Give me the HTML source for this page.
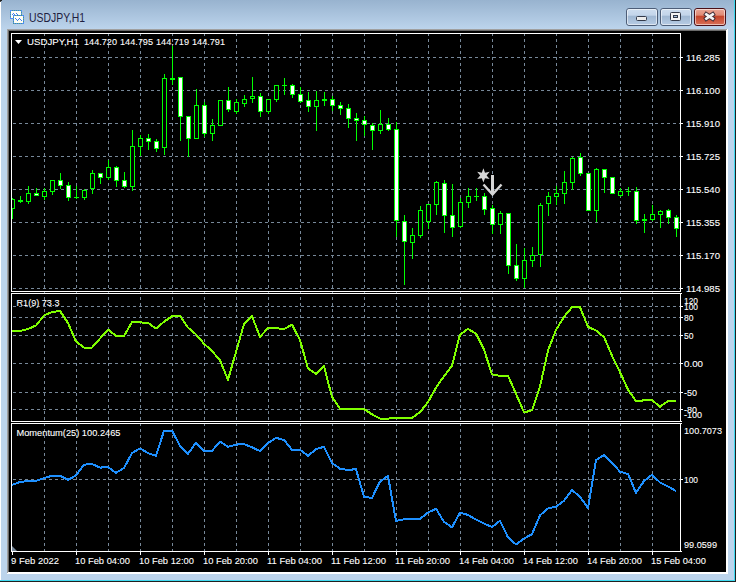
<!DOCTYPE html>
<html><head><meta charset="utf-8"><title>USDJPY,H1</title>
<style>
html,body{margin:0;padding:0;width:738px;height:582px;overflow:hidden;background:#fff;}
svg{display:block;}
text{font-family:"Liberation Sans",sans-serif;}
</style></head><body>
<svg width="738" height="582" viewBox="0 0 738 582">
<defs>
<linearGradient id="tg" x1="0" y1="0" x2="0" y2="1">
<stop offset="0" stop-color="#98b3cf"/><stop offset="1" stop-color="#bcd4ec"/>
</linearGradient>
<linearGradient id="bg1" x1="0" y1="0" x2="0" y2="1">
<stop offset="0" stop-color="#cfdeef"/><stop offset="0.4" stop-color="#c3d5ea"/>
<stop offset="0.44" stop-color="#9fb7d2"/><stop offset="1" stop-color="#b8cde5"/>
</linearGradient>
<linearGradient id="bgc" x1="0" y1="0" x2="0" y2="1">
<stop offset="0" stop-color="#eba99a"/><stop offset="0.4" stop-color="#e08a74"/>
<stop offset="0.44" stop-color="#c4432a"/><stop offset="1" stop-color="#d9735a"/>
</linearGradient>
</defs>

<rect x="0" y="0" width="738" height="582" fill="#bcd4ec"/>
<rect x="0" y="0" width="738" height="29" fill="url(#tg)"/>
<rect x="0" y="2" width="1" height="580" fill="#ffffff"/>
<rect x="0" y="0" width="2" height="1" fill="#202020"/><rect x="0" y="1" width="1" height="1" fill="#404040"/>
<rect x="0" y="580" width="735" height="1" fill="#3fd9f0"/>
<rect x="0" y="581" width="736" height="1" fill="#202020"/>
<rect x="734" y="0" width="1" height="581" fill="#3fd9f0"/>
<rect x="735" y="0" width="1" height="582" fill="#202020"/>
<rect x="736" y="0" width="2" height="582" fill="#ffffff"/>
<rect x="7" y="29" width="721" height="545" fill="#ffffff"/>
<rect x="7" y="29" width="720" height="544" fill="#a0a0a0"/>
<rect x="8" y="30" width="718" height="542" fill="#696969"/>
<rect x="9" y="31" width="717" height="541" fill="#000000"/>
<rect x="726" y="30" width="1" height="543" fill="#ffffff"/><rect x="8" y="572" width="719" height="1" fill="#ffffff"/>
<g shape-rendering="crispEdges"><rect x="10" y="10" width="12" height="9" fill="#4f8ef5"/><rect x="11" y="11" width="10" height="7" fill="#fffff4"/><rect x="13" y="15" width="11" height="9" fill="#4f8ef5"/><rect x="14" y="16" width="9" height="7" fill="#fffff4"/><rect x="12" y="14" width="1" height="1" fill="#3f7ef2"/><rect x="13" y="13" width="1" height="1" fill="#3f7ef2"/><rect x="14" y="14" width="1" height="1" fill="#3f7ef2"/><rect x="16" y="13" width="1" height="1" fill="#3f7ef2"/><rect x="17" y="14" width="1" height="1" fill="#3f7ef2"/><rect x="18" y="15" width="1" height="1" fill="#3f7ef2"/><rect x="19" y="15" width="1" height="1" fill="#3f7ef2"/><rect x="20" y="15" width="1" height="1" fill="#3f7ef2"/><rect x="15" y="18" width="1" height="1" fill="#3f7ef2"/><rect x="16" y="19" width="1" height="1" fill="#3f7ef2"/><rect x="17" y="20" width="1" height="1" fill="#3f7ef2"/><rect x="18" y="19" width="1" height="1" fill="#3f7ef2"/><rect x="19" y="18" width="1" height="1" fill="#3f7ef2"/><rect x="20" y="19" width="1" height="1" fill="#3f7ef2"/><rect x="21" y="20" width="1" height="1" fill="#3f7ef2"/><rect x="12" y="10" width="1" height="1" fill="#4a9a88"/><rect x="14" y="10" width="1" height="1" fill="#4a9a88"/><rect x="16" y="10" width="1" height="1" fill="#4a9a88"/><rect x="18" y="10" width="1" height="1" fill="#4a9a88"/><rect x="20" y="10" width="1" height="1" fill="#4a9a88"/><rect x="10" y="12" width="1" height="1" fill="#4a9a88"/><rect x="10" y="14" width="1" height="1" fill="#4a9a88"/><rect x="10" y="16" width="1" height="1" fill="#4a9a88"/><rect x="21" y="12" width="1" height="1" fill="#4a9a88"/><rect x="21" y="14" width="1" height="1" fill="#4a9a88"/><rect x="13" y="17" width="1" height="1" fill="#4a9a88"/><rect x="13" y="19" width="1" height="1" fill="#4a9a88"/><rect x="13" y="21" width="1" height="1" fill="#4a9a88"/><rect x="13" y="23" width="1" height="1" fill="#4a9a88"/><rect x="15" y="23" width="1" height="1" fill="#4a9a88"/><rect x="17" y="23" width="1" height="1" fill="#4a9a88"/><rect x="19" y="23" width="1" height="1" fill="#4a9a88"/><rect x="21" y="23" width="1" height="1" fill="#4a9a88"/><rect x="23" y="17" width="1" height="1" fill="#4a9a88"/><rect x="23" y="19" width="1" height="1" fill="#4a9a88"/><rect x="23" y="21" width="1" height="1" fill="#4a9a88"/><rect x="15" y="15" width="1" height="1" fill="#4a9a88"/><rect x="17" y="15" width="1" height="1" fill="#4a9a88"/><rect x="19" y="15" width="1" height="1" fill="#4a9a88"/><rect x="21" y="15" width="1" height="1" fill="#4a9a88"/></g>
<text x="29" y="22" font-size="12" fill="#1e2040" textLength="56" lengthAdjust="spacingAndGlyphs">USDJPY,H1</text>
<rect x="626.5" y="8.5" width="31" height="17" rx="2.5" fill="url(#bg1)" stroke="#4d5e78" stroke-width="1"/><rect x="627.5" y="9.5" width="29" height="15" rx="1.5" fill="none" stroke="#ffffff" stroke-opacity="0.55" stroke-width="1"/>
<rect x="660.5" y="8.5" width="31" height="17" rx="2.5" fill="url(#bg1)" stroke="#4d5e78" stroke-width="1"/><rect x="661.5" y="9.5" width="29" height="15" rx="1.5" fill="none" stroke="#ffffff" stroke-opacity="0.55" stroke-width="1"/>
<rect x="694.5" y="8.5" width="31" height="17" rx="2.5" fill="url(#bgc)" stroke="#4a1018" stroke-width="1"/><rect x="695.5" y="9.5" width="29" height="15" rx="1.5" fill="none" stroke="#ffffff" stroke-opacity="0.55" stroke-width="1"/>
<rect x="636.5" y="16.5" width="10" height="4" rx="1" fill="#ececec" stroke="#333a4a" stroke-width="1"/>
<rect x="670.5" y="12.5" width="10" height="8" rx="1" fill="#f4f4f4" stroke="#333a4a" stroke-width="1"/>
<rect x="673.5" y="15.5" width="4" height="2" fill="#a8c0dc" stroke="#333a4a" stroke-width="1"/>
<path d="M706.3,14.4 L712.7,18.6 M712.7,14.4 L706.3,18.6" stroke="#3a2630" stroke-width="4.4" stroke-linecap="square"/>
<path d="M706.3,14.4 L712.7,18.6 M712.7,14.4 L706.3,18.6" stroke="#f4f4f4" stroke-width="2.6" stroke-linecap="square"/>
<g shape-rendering="crispEdges">
<line x1="13" y1="57.5" x2="680" y2="57.5" stroke="#778899" stroke-width="1" stroke-dasharray="3 3"/>
<line x1="13" y1="90.5" x2="680" y2="90.5" stroke="#778899" stroke-width="1" stroke-dasharray="3 3"/>
<line x1="13" y1="123.5" x2="680" y2="123.5" stroke="#778899" stroke-width="1" stroke-dasharray="3 3"/>
<line x1="13" y1="156.5" x2="680" y2="156.5" stroke="#778899" stroke-width="1" stroke-dasharray="3 3"/>
<line x1="13" y1="189.5" x2="680" y2="189.5" stroke="#778899" stroke-width="1" stroke-dasharray="3 3"/>
<line x1="13" y1="222.5" x2="680" y2="222.5" stroke="#778899" stroke-width="1" stroke-dasharray="3 3"/>
<line x1="13" y1="255.5" x2="680" y2="255.5" stroke="#778899" stroke-width="1" stroke-dasharray="3 3"/>
<line x1="13" y1="288.5" x2="680" y2="288.5" stroke="#778899" stroke-width="1" stroke-dasharray="3 3"/>
<line x1="13" y1="306.5" x2="680" y2="306.5" stroke="#778899" stroke-width="1" stroke-dasharray="3 3"/>
<line x1="13" y1="317.5" x2="680" y2="317.5" stroke="#778899" stroke-width="1" stroke-dasharray="3 3"/>
<line x1="13" y1="335.5" x2="680" y2="335.5" stroke="#778899" stroke-width="1" stroke-dasharray="3 3"/>
<line x1="13" y1="363.5" x2="680" y2="363.5" stroke="#778899" stroke-width="1" stroke-dasharray="3 3"/>
<line x1="13" y1="392.5" x2="680" y2="392.5" stroke="#778899" stroke-width="1" stroke-dasharray="3 3"/>
<line x1="13" y1="409.5" x2="680" y2="409.5" stroke="#778899" stroke-width="1" stroke-dasharray="3 3"/>
<line x1="13" y1="479.5" x2="680" y2="479.5" stroke="#778899" stroke-width="1" stroke-dasharray="3 3"/>
<line x1="44.5" y1="33" x2="44.5" y2="551" stroke="#778899" stroke-width="1" stroke-dasharray="3 3"/>
<line x1="76.5" y1="33" x2="76.5" y2="551" stroke="#778899" stroke-width="1" stroke-dasharray="3 3"/>
<line x1="108.5" y1="33" x2="108.5" y2="551" stroke="#778899" stroke-width="1" stroke-dasharray="3 3"/>
<line x1="140.5" y1="33" x2="140.5" y2="551" stroke="#778899" stroke-width="1" stroke-dasharray="3 3"/>
<line x1="172.5" y1="33" x2="172.5" y2="551" stroke="#778899" stroke-width="1" stroke-dasharray="3 3"/>
<line x1="204.5" y1="33" x2="204.5" y2="551" stroke="#778899" stroke-width="1" stroke-dasharray="3 3"/>
<line x1="236.5" y1="33" x2="236.5" y2="551" stroke="#778899" stroke-width="1" stroke-dasharray="3 3"/>
<line x1="268.5" y1="33" x2="268.5" y2="551" stroke="#778899" stroke-width="1" stroke-dasharray="3 3"/>
<line x1="300.5" y1="33" x2="300.5" y2="551" stroke="#778899" stroke-width="1" stroke-dasharray="3 3"/>
<line x1="332.5" y1="33" x2="332.5" y2="551" stroke="#778899" stroke-width="1" stroke-dasharray="3 3"/>
<line x1="364.5" y1="33" x2="364.5" y2="551" stroke="#778899" stroke-width="1" stroke-dasharray="3 3"/>
<line x1="396.5" y1="33" x2="396.5" y2="551" stroke="#778899" stroke-width="1" stroke-dasharray="3 3"/>
<line x1="428.5" y1="33" x2="428.5" y2="551" stroke="#778899" stroke-width="1" stroke-dasharray="3 3"/>
<line x1="460.5" y1="33" x2="460.5" y2="551" stroke="#778899" stroke-width="1" stroke-dasharray="3 3"/>
<line x1="492.5" y1="33" x2="492.5" y2="551" stroke="#778899" stroke-width="1" stroke-dasharray="3 3"/>
<line x1="524.5" y1="33" x2="524.5" y2="551" stroke="#778899" stroke-width="1" stroke-dasharray="3 3"/>
<line x1="556.5" y1="33" x2="556.5" y2="551" stroke="#778899" stroke-width="1" stroke-dasharray="3 3"/>
<line x1="588.5" y1="33" x2="588.5" y2="551" stroke="#778899" stroke-width="1" stroke-dasharray="3 3"/>
<line x1="620.5" y1="33" x2="620.5" y2="551" stroke="#778899" stroke-width="1" stroke-dasharray="3 3"/>
<line x1="652.5" y1="33" x2="652.5" y2="551" stroke="#778899" stroke-width="1" stroke-dasharray="3 3"/>
</g>
<g shape-rendering="crispEdges">
<clipPath id="cm"><rect x="12" y="34" width="668" height="257"/></clipPath>
<g clip-path="url(#cm)">
<rect x="12" y="198" width="1" height="21" fill="#00ff00"/>
<rect x="10" y="199" width="5" height="10" fill="#00ff00"/>
<rect x="11" y="200" width="3" height="8" fill="#000000"/>
<rect x="20" y="196" width="1" height="7" fill="#00ff00"/>
<rect x="18" y="200" width="5" height="2" fill="#00ff00"/>
<rect x="28" y="186" width="1" height="18" fill="#00ff00"/>
<rect x="26" y="193" width="5" height="9" fill="#00ff00"/>
<rect x="27" y="194" width="3" height="7" fill="#000000"/>
<rect x="36" y="188" width="1" height="8" fill="#00ff00"/>
<rect x="34" y="193" width="5" height="3" fill="#00ff00"/>
<rect x="35" y="194" width="3" height="1" fill="#ffffff"/>
<rect x="44" y="188" width="1" height="12" fill="#00ff00"/>
<rect x="42" y="191" width="5" height="6" fill="#00ff00"/>
<rect x="43" y="192" width="3" height="4" fill="#000000"/>
<rect x="52" y="180" width="1" height="15" fill="#00ff00"/>
<rect x="50" y="180" width="5" height="12" fill="#00ff00"/>
<rect x="51" y="181" width="3" height="10" fill="#000000"/>
<rect x="60" y="173" width="1" height="16" fill="#00ff00"/>
<rect x="58" y="180" width="5" height="6" fill="#00ff00"/>
<rect x="59" y="181" width="3" height="4" fill="#ffffff"/>
<rect x="68" y="182" width="1" height="19" fill="#00ff00"/>
<rect x="66" y="185" width="5" height="13" fill="#00ff00"/>
<rect x="67" y="186" width="3" height="11" fill="#ffffff"/>
<rect x="76" y="186" width="1" height="13" fill="#00ff00"/>
<rect x="74" y="197" width="5" height="1" fill="#00ff00"/>
<rect x="84" y="189" width="1" height="11" fill="#00ff00"/>
<rect x="82" y="190" width="5" height="8" fill="#00ff00"/>
<rect x="83" y="191" width="3" height="6" fill="#000000"/>
<rect x="92" y="170" width="1" height="24" fill="#00ff00"/>
<rect x="90" y="173" width="5" height="16" fill="#00ff00"/>
<rect x="91" y="174" width="3" height="14" fill="#000000"/>
<rect x="100" y="173" width="1" height="11" fill="#00ff00"/>
<rect x="98" y="173" width="5" height="5" fill="#00ff00"/>
<rect x="99" y="174" width="3" height="3" fill="#ffffff"/>
<rect x="108" y="160" width="1" height="20" fill="#00ff00"/>
<rect x="106" y="167" width="5" height="11" fill="#00ff00"/>
<rect x="107" y="168" width="3" height="9" fill="#000000"/>
<rect x="116" y="166" width="1" height="21" fill="#00ff00"/>
<rect x="114" y="167" width="5" height="14" fill="#00ff00"/>
<rect x="115" y="168" width="3" height="12" fill="#ffffff"/>
<rect x="124" y="172" width="1" height="16" fill="#00ff00"/>
<rect x="122" y="180" width="5" height="7" fill="#00ff00"/>
<rect x="123" y="181" width="3" height="5" fill="#ffffff"/>
<rect x="132" y="130" width="1" height="61" fill="#00ff00"/>
<rect x="130" y="146" width="5" height="41" fill="#00ff00"/>
<rect x="131" y="147" width="3" height="39" fill="#000000"/>
<rect x="140" y="135" width="1" height="21" fill="#00ff00"/>
<rect x="138" y="138" width="5" height="9" fill="#00ff00"/>
<rect x="139" y="139" width="3" height="7" fill="#000000"/>
<rect x="148" y="134" width="1" height="16" fill="#00ff00"/>
<rect x="146" y="138" width="5" height="4" fill="#00ff00"/>
<rect x="147" y="139" width="3" height="2" fill="#ffffff"/>
<rect x="156" y="139" width="1" height="13" fill="#00ff00"/>
<rect x="154" y="141" width="5" height="8" fill="#00ff00"/>
<rect x="155" y="142" width="3" height="6" fill="#ffffff"/>
<rect x="164" y="74" width="1" height="81" fill="#00ff00"/>
<rect x="162" y="78" width="5" height="70" fill="#00ff00"/>
<rect x="163" y="79" width="3" height="68" fill="#000000"/>
<rect x="172" y="46" width="1" height="39" fill="#00ff00"/>
<rect x="170" y="78" width="5" height="2" fill="#00ff00"/>
<rect x="180" y="77" width="1" height="64" fill="#00ff00"/>
<rect x="178" y="77" width="5" height="40" fill="#00ff00"/>
<rect x="179" y="78" width="3" height="38" fill="#ffffff"/>
<rect x="188" y="116" width="1" height="41" fill="#00ff00"/>
<rect x="186" y="116" width="5" height="23" fill="#00ff00"/>
<rect x="187" y="117" width="3" height="21" fill="#ffffff"/>
<rect x="196" y="89" width="1" height="50" fill="#00ff00"/>
<rect x="194" y="105" width="5" height="34" fill="#00ff00"/>
<rect x="195" y="106" width="3" height="32" fill="#000000"/>
<rect x="204" y="102" width="1" height="35" fill="#00ff00"/>
<rect x="202" y="105" width="5" height="29" fill="#00ff00"/>
<rect x="203" y="106" width="3" height="27" fill="#ffffff"/>
<rect x="212" y="119" width="1" height="22" fill="#00ff00"/>
<rect x="210" y="125" width="5" height="9" fill="#00ff00"/>
<rect x="211" y="126" width="3" height="7" fill="#000000"/>
<rect x="220" y="100" width="1" height="26" fill="#00ff00"/>
<rect x="218" y="100" width="5" height="26" fill="#00ff00"/>
<rect x="219" y="101" width="3" height="24" fill="#000000"/>
<rect x="228" y="87" width="1" height="25" fill="#00ff00"/>
<rect x="226" y="100" width="5" height="10" fill="#00ff00"/>
<rect x="227" y="101" width="3" height="8" fill="#ffffff"/>
<rect x="236" y="99" width="1" height="15" fill="#00ff00"/>
<rect x="234" y="102" width="5" height="10" fill="#00ff00"/>
<rect x="235" y="103" width="3" height="8" fill="#000000"/>
<rect x="244" y="95" width="1" height="12" fill="#00ff00"/>
<rect x="242" y="99" width="5" height="5" fill="#00ff00"/>
<rect x="243" y="100" width="3" height="3" fill="#000000"/>
<rect x="252" y="77" width="1" height="26" fill="#00ff00"/>
<rect x="250" y="96" width="5" height="3" fill="#00ff00"/>
<rect x="251" y="97" width="3" height="1" fill="#000000"/>
<rect x="260" y="93" width="1" height="24" fill="#00ff00"/>
<rect x="258" y="96" width="5" height="16" fill="#00ff00"/>
<rect x="259" y="97" width="3" height="14" fill="#ffffff"/>
<rect x="268" y="99" width="1" height="15" fill="#00ff00"/>
<rect x="266" y="99" width="5" height="13" fill="#00ff00"/>
<rect x="267" y="100" width="3" height="11" fill="#000000"/>
<rect x="276" y="85" width="1" height="17" fill="#00ff00"/>
<rect x="274" y="85" width="5" height="15" fill="#00ff00"/>
<rect x="275" y="86" width="3" height="13" fill="#000000"/>
<rect x="284" y="78" width="1" height="17" fill="#00ff00"/>
<rect x="282" y="85" width="5" height="1" fill="#00ff00"/>
<rect x="292" y="84" width="1" height="14" fill="#00ff00"/>
<rect x="290" y="85" width="5" height="10" fill="#00ff00"/>
<rect x="291" y="86" width="3" height="8" fill="#ffffff"/>
<rect x="300" y="87" width="1" height="16" fill="#00ff00"/>
<rect x="298" y="94" width="5" height="8" fill="#00ff00"/>
<rect x="299" y="95" width="3" height="6" fill="#ffffff"/>
<rect x="308" y="92" width="1" height="20" fill="#00ff00"/>
<rect x="306" y="100" width="5" height="7" fill="#00ff00"/>
<rect x="307" y="101" width="3" height="5" fill="#ffffff"/>
<rect x="316" y="91" width="1" height="40" fill="#00ff00"/>
<rect x="314" y="100" width="5" height="7" fill="#00ff00"/>
<rect x="315" y="101" width="3" height="5" fill="#000000"/>
<rect x="324" y="92" width="1" height="14" fill="#00ff00"/>
<rect x="322" y="99" width="5" height="2" fill="#00ff00"/>
<rect x="332" y="96" width="1" height="15" fill="#00ff00"/>
<rect x="330" y="99" width="5" height="7" fill="#00ff00"/>
<rect x="331" y="100" width="3" height="5" fill="#ffffff"/>
<rect x="340" y="102" width="1" height="13" fill="#00ff00"/>
<rect x="338" y="105" width="5" height="4" fill="#00ff00"/>
<rect x="339" y="106" width="3" height="2" fill="#ffffff"/>
<rect x="348" y="104" width="1" height="24" fill="#00ff00"/>
<rect x="346" y="108" width="5" height="11" fill="#00ff00"/>
<rect x="347" y="109" width="3" height="9" fill="#ffffff"/>
<rect x="356" y="113" width="1" height="28" fill="#00ff00"/>
<rect x="354" y="118" width="5" height="3" fill="#00ff00"/>
<rect x="355" y="119" width="3" height="1" fill="#ffffff"/>
<rect x="364" y="116" width="1" height="20" fill="#00ff00"/>
<rect x="362" y="120" width="5" height="5" fill="#00ff00"/>
<rect x="363" y="121" width="3" height="3" fill="#ffffff"/>
<rect x="372" y="123" width="1" height="27" fill="#00ff00"/>
<rect x="370" y="125" width="5" height="6" fill="#00ff00"/>
<rect x="371" y="126" width="3" height="4" fill="#ffffff"/>
<rect x="380" y="110" width="1" height="24" fill="#00ff00"/>
<rect x="378" y="124" width="5" height="7" fill="#00ff00"/>
<rect x="379" y="125" width="3" height="5" fill="#000000"/>
<rect x="388" y="118" width="1" height="13" fill="#00ff00"/>
<rect x="386" y="124" width="5" height="6" fill="#00ff00"/>
<rect x="387" y="125" width="3" height="4" fill="#ffffff"/>
<rect x="396" y="122" width="1" height="115" fill="#00ff00"/>
<rect x="394" y="129" width="5" height="92" fill="#00ff00"/>
<rect x="395" y="130" width="3" height="90" fill="#ffffff"/>
<rect x="404" y="215" width="1" height="70" fill="#00ff00"/>
<rect x="402" y="221" width="5" height="21" fill="#00ff00"/>
<rect x="403" y="222" width="3" height="19" fill="#ffffff"/>
<rect x="412" y="228" width="1" height="31" fill="#00ff00"/>
<rect x="410" y="235" width="5" height="8" fill="#00ff00"/>
<rect x="411" y="236" width="3" height="6" fill="#000000"/>
<rect x="420" y="206" width="1" height="32" fill="#00ff00"/>
<rect x="418" y="210" width="5" height="26" fill="#00ff00"/>
<rect x="419" y="211" width="3" height="24" fill="#000000"/>
<rect x="428" y="204" width="1" height="25" fill="#00ff00"/>
<rect x="426" y="204" width="5" height="18" fill="#00ff00"/>
<rect x="427" y="205" width="3" height="16" fill="#000000"/>
<rect x="436" y="181" width="1" height="34" fill="#00ff00"/>
<rect x="434" y="182" width="5" height="23" fill="#00ff00"/>
<rect x="435" y="183" width="3" height="21" fill="#000000"/>
<rect x="444" y="180" width="1" height="53" fill="#00ff00"/>
<rect x="442" y="183" width="5" height="33" fill="#00ff00"/>
<rect x="443" y="184" width="3" height="31" fill="#ffffff"/>
<rect x="452" y="184" width="1" height="53" fill="#00ff00"/>
<rect x="450" y="215" width="5" height="13" fill="#00ff00"/>
<rect x="451" y="216" width="3" height="11" fill="#ffffff"/>
<rect x="460" y="198" width="1" height="30" fill="#00ff00"/>
<rect x="458" y="202" width="5" height="25" fill="#00ff00"/>
<rect x="459" y="203" width="3" height="23" fill="#000000"/>
<rect x="468" y="188" width="1" height="20" fill="#00ff00"/>
<rect x="466" y="196" width="5" height="7" fill="#00ff00"/>
<rect x="467" y="197" width="3" height="5" fill="#000000"/>
<rect x="476" y="188" width="1" height="13" fill="#00ff00"/>
<rect x="474" y="196" width="5" height="1" fill="#00ff00"/>
<rect x="484" y="193" width="1" height="22" fill="#00ff00"/>
<rect x="482" y="196" width="5" height="14" fill="#00ff00"/>
<rect x="483" y="197" width="3" height="12" fill="#ffffff"/>
<rect x="492" y="205" width="1" height="29" fill="#00ff00"/>
<rect x="490" y="208" width="5" height="17" fill="#00ff00"/>
<rect x="491" y="209" width="3" height="15" fill="#ffffff"/>
<rect x="500" y="211" width="1" height="23" fill="#00ff00"/>
<rect x="498" y="213" width="5" height="12" fill="#00ff00"/>
<rect x="499" y="214" width="3" height="10" fill="#000000"/>
<rect x="508" y="213" width="1" height="61" fill="#00ff00"/>
<rect x="506" y="213" width="5" height="53" fill="#00ff00"/>
<rect x="507" y="214" width="3" height="51" fill="#ffffff"/>
<rect x="516" y="244" width="1" height="37" fill="#00ff00"/>
<rect x="514" y="265" width="5" height="14" fill="#00ff00"/>
<rect x="515" y="266" width="3" height="12" fill="#ffffff"/>
<rect x="524" y="248" width="1" height="40" fill="#00ff00"/>
<rect x="522" y="260" width="5" height="19" fill="#00ff00"/>
<rect x="523" y="261" width="3" height="17" fill="#000000"/>
<rect x="532" y="247" width="1" height="20" fill="#00ff00"/>
<rect x="530" y="255" width="5" height="6" fill="#00ff00"/>
<rect x="531" y="256" width="3" height="4" fill="#000000"/>
<rect x="540" y="203" width="1" height="64" fill="#00ff00"/>
<rect x="538" y="205" width="5" height="50" fill="#00ff00"/>
<rect x="539" y="206" width="3" height="48" fill="#000000"/>
<rect x="548" y="192" width="1" height="24" fill="#00ff00"/>
<rect x="546" y="196" width="5" height="8" fill="#00ff00"/>
<rect x="547" y="197" width="3" height="6" fill="#000000"/>
<rect x="556" y="186" width="1" height="19" fill="#00ff00"/>
<rect x="554" y="193" width="5" height="4" fill="#00ff00"/>
<rect x="555" y="194" width="3" height="2" fill="#000000"/>
<rect x="564" y="171" width="1" height="33" fill="#00ff00"/>
<rect x="562" y="182" width="5" height="12" fill="#00ff00"/>
<rect x="563" y="183" width="3" height="10" fill="#000000"/>
<rect x="572" y="157" width="1" height="33" fill="#00ff00"/>
<rect x="570" y="158" width="5" height="25" fill="#00ff00"/>
<rect x="571" y="159" width="3" height="23" fill="#000000"/>
<rect x="580" y="153" width="1" height="23" fill="#00ff00"/>
<rect x="578" y="157" width="5" height="17" fill="#00ff00"/>
<rect x="579" y="158" width="3" height="15" fill="#ffffff"/>
<rect x="588" y="173" width="1" height="38" fill="#00ff00"/>
<rect x="586" y="173" width="5" height="38" fill="#00ff00"/>
<rect x="587" y="174" width="3" height="36" fill="#ffffff"/>
<rect x="596" y="168" width="1" height="54" fill="#00ff00"/>
<rect x="594" y="169" width="5" height="42" fill="#00ff00"/>
<rect x="595" y="170" width="3" height="40" fill="#000000"/>
<rect x="604" y="169" width="1" height="24" fill="#00ff00"/>
<rect x="602" y="169" width="5" height="9" fill="#00ff00"/>
<rect x="603" y="170" width="3" height="7" fill="#ffffff"/>
<rect x="612" y="177" width="1" height="17" fill="#00ff00"/>
<rect x="610" y="177" width="5" height="17" fill="#00ff00"/>
<rect x="611" y="178" width="3" height="15" fill="#ffffff"/>
<rect x="620" y="188" width="1" height="9" fill="#00ff00"/>
<rect x="618" y="191" width="5" height="5" fill="#00ff00"/>
<rect x="619" y="192" width="3" height="3" fill="#000000"/>
<rect x="628" y="187" width="1" height="9" fill="#00ff00"/>
<rect x="626" y="191" width="5" height="1" fill="#00ff00"/>
<rect x="636" y="187" width="1" height="37" fill="#00ff00"/>
<rect x="634" y="191" width="5" height="30" fill="#00ff00"/>
<rect x="635" y="192" width="3" height="28" fill="#ffffff"/>
<rect x="644" y="214" width="1" height="19" fill="#00ff00"/>
<rect x="642" y="219" width="5" height="2" fill="#00ff00"/>
<rect x="652" y="205" width="1" height="16" fill="#00ff00"/>
<rect x="650" y="214" width="5" height="6" fill="#00ff00"/>
<rect x="651" y="215" width="3" height="4" fill="#000000"/>
<rect x="660" y="210" width="1" height="18" fill="#00ff00"/>
<rect x="658" y="211" width="5" height="4" fill="#00ff00"/>
<rect x="659" y="212" width="3" height="2" fill="#000000"/>
<rect x="668" y="209" width="1" height="15" fill="#00ff00"/>
<rect x="666" y="210" width="5" height="8" fill="#00ff00"/>
<rect x="667" y="211" width="3" height="6" fill="#ffffff"/>
<rect x="676" y="215" width="1" height="22" fill="#00ff00"/>
<rect x="674" y="217" width="5" height="12" fill="#00ff00"/>
<rect x="675" y="218" width="3" height="10" fill="#ffffff"/>
</g></g>
<polygon points="483.40,168.20 485.00,172.63 489.64,171.80 486.60,175.40 489.64,179.00 485.00,178.17 483.40,182.60 481.80,178.17 477.16,179.00 480.20,175.40 477.16,171.80 481.80,172.63" fill="#d6d6d6"/>
<rect x="491" y="175" width="3" height="19" fill="#d6d6d6"/>
<polyline points="483.5,184.5 492.5,194.5 501.5,184.5" fill="none" stroke="#d6d6d6" stroke-width="2.4" stroke-linejoin="miter"/>
<clipPath id="cr"><rect x="12" y="294" width="668" height="127"/></clipPath>
<clipPath id="cmo"><rect x="12" y="424" width="668" height="127"/></clipPath>
<polyline points="12,331 20,331 28,329 36,325.5 44,315.5 52,312 60,311 68,323 76,341.5 84,347.5 92,347.5 100,338.5 108,329.5 116,336 124,336 132,322.2 140,322.4 148,322.9 156,328.6 164,321.7 172,316.3 180,315.8 188,327.6 196,334.4 204,343.7 212,351 220,360.4 228,379.7 236,352 244,324 252,316.3 260,336.8 268,328.2 276,328.2 284,329 292,324.7 300,340 308,368.6 316,373.9 324,366.3 332,397 340,408.7 348,408.7 356,409 364,409 372,414.3 380,418.6 388,418.6 396,418 404,418 412,418 420,412.2 428,402 436,387.6 444,376.2 452,365.8 460,334.6 468,328.9 476,333.6 484,349.7 492,374.3 500,375.8 508,375.8 516,393.8 524,412.4 532,410.3 540,386.6 548,350.5 556,329.9 564,316.9 572,307.2 580,307.2 588,326.8 596,330.5 604,337.1 612,355.7 620,372.2 628,389.7 636,401 644,400.4 652,400 660,406.8 668,401 676,401" fill="none" stroke="#7fff00" stroke-width="2" stroke-linejoin="round" shape-rendering="crispEdges" clip-path="url(#cr)"/>
<polyline points="12,485 20,482 28,480.9 36,480.9 44,478.2 52,475.8 60,475.8 68,479.8 76,475.5 84,464.7 92,464 100,467.6 108,467.1 116,472.8 124,468 132,453.1 140,448.4 148,453.1 156,455.8 164,430.8 172,430.8 180,445.7 188,453.8 196,442.7 204,450.8 212,450.8 220,441.6 228,446.8 236,444.6 244,444.1 252,447.3 260,451.1 268,443 276,437.8 284,440 292,449.8 300,449.8 308,455.8 316,449.2 324,446.8 332,463 340,468.7 348,469.9 356,469.2 364,496.7 372,497.9 380,481.5 388,476 396,521 404,519.2 412,518.8 420,518.8 428,512.6 436,508.7 444,521.9 452,527.3 460,512.6 468,514.9 476,519.6 484,523.5 492,527 500,520.8 508,537.3 516,544.5 524,538.5 532,534.2 540,515.3 548,508.4 556,506.7 564,500.7 572,489.9 580,496.9 588,508 596,460.1 604,455.1 612,462.9 620,471.7 628,474 636,492.9 644,481 652,474.8 660,482.5 668,486.4 676,491" fill="none" stroke="#1e90ff" stroke-width="2" stroke-linejoin="round" shape-rendering="crispEdges" clip-path="url(#cmo)"/>
<g shape-rendering="crispEdges" fill="#ffffff">
<rect x="11" y="33" width="670" height="1"/>
<rect x="11" y="291" width="670" height="1"/>
<rect x="11" y="33" width="1" height="259"/>
<rect x="680" y="33" width="1" height="259"/>
<rect x="11" y="293" width="670" height="1"/>
<rect x="11" y="421" width="670" height="1"/>
<rect x="11" y="293" width="1" height="129"/>
<rect x="680" y="293" width="1" height="129"/>
<rect x="11" y="423" width="670" height="1"/>
<rect x="11" y="551" width="670" height="1"/>
<rect x="11" y="423" width="1" height="129"/>
<rect x="680" y="423" width="1" height="129"/>
<rect x="681" y="57" width="2" height="1"/>
<rect x="681" y="90" width="2" height="1"/>
<rect x="681" y="123" width="2" height="1"/>
<rect x="681" y="156" width="2" height="1"/>
<rect x="681" y="189" width="2" height="1"/>
<rect x="681" y="222" width="2" height="1"/>
<rect x="681" y="255" width="2" height="1"/>
<rect x="681" y="288" width="2" height="1"/>
<rect x="681" y="306" width="2" height="1"/>
<rect x="681" y="317" width="2" height="1"/>
<rect x="681" y="335" width="2" height="1"/>
<rect x="681" y="363" width="2" height="1"/>
<rect x="681" y="392" width="2" height="1"/>
<rect x="681" y="409" width="2" height="1"/>
<rect x="681" y="479" width="2" height="1"/>
<rect x="681" y="293" width="1" height="1"/>
<rect x="681" y="421" width="1" height="1"/>
<rect x="681" y="423" width="1" height="1"/>
<rect x="681" y="551" width="1" height="1"/>
<rect x="12" y="552" width="1" height="3"/>
<rect x="76" y="552" width="1" height="3"/>
<rect x="140" y="552" width="1" height="3"/>
<rect x="204" y="552" width="1" height="3"/>
<rect x="268" y="552" width="1" height="3"/>
<rect x="332" y="552" width="1" height="3"/>
<rect x="396" y="552" width="1" height="3"/>
<rect x="460" y="552" width="1" height="3"/>
<rect x="524" y="552" width="1" height="3"/>
<rect x="588" y="552" width="1" height="3"/>
<rect x="652" y="552" width="1" height="3"/>
</g>
<polygon points="12,546 12,551 17,551" fill="#778899"/>
<polygon points="15,40 22,40 18.5,44" fill="#ffffff"/>
<text x="27" y="45" font-size="9.8" fill="#ffffff" stroke="#ffffff" stroke-width="0.1" textLength="52" lengthAdjust="spacingAndGlyphs">USDJPY,H1</text>
<text x="84" y="45" font-size="9.8" fill="#ffffff" stroke="#ffffff" stroke-width="0.1" textLength="33" lengthAdjust="spacingAndGlyphs">144.720</text>
<text x="120" y="45" font-size="9.8" fill="#ffffff" stroke="#ffffff" stroke-width="0.1" textLength="33" lengthAdjust="spacingAndGlyphs">144.795</text>
<text x="156" y="45" font-size="9.8" fill="#ffffff" stroke="#ffffff" stroke-width="0.1" textLength="33" lengthAdjust="spacingAndGlyphs">144.719</text>
<text x="192" y="45" font-size="9.8" fill="#ffffff" stroke="#ffffff" stroke-width="0.1" textLength="33" lengthAdjust="spacingAndGlyphs">144.791</text>
<text x="16.5" y="306" font-size="9.8" fill="#ffffff" stroke="#ffffff" stroke-width="0.1" textLength="43" lengthAdjust="spacingAndGlyphs">R1(9) 73.3</text>
<text x="16.5" y="436" font-size="9.8" fill="#ffffff" stroke="#ffffff" stroke-width="0.1" textLength="104" lengthAdjust="spacingAndGlyphs">Momentum(25) 100.2465</text>
<text x="686" y="61" font-size="9.8" fill="#ffffff" stroke="#ffffff" stroke-width="0.1" textLength="34" lengthAdjust="spacingAndGlyphs">116.285</text>
<text x="686" y="94" font-size="9.8" fill="#ffffff" stroke="#ffffff" stroke-width="0.1" textLength="34" lengthAdjust="spacingAndGlyphs">116.100</text>
<text x="686" y="127" font-size="9.8" fill="#ffffff" stroke="#ffffff" stroke-width="0.1" textLength="34" lengthAdjust="spacingAndGlyphs">115.910</text>
<text x="686" y="160" font-size="9.8" fill="#ffffff" stroke="#ffffff" stroke-width="0.1" textLength="34" lengthAdjust="spacingAndGlyphs">115.725</text>
<text x="686" y="193" font-size="9.8" fill="#ffffff" stroke="#ffffff" stroke-width="0.1" textLength="34" lengthAdjust="spacingAndGlyphs">115.540</text>
<text x="686" y="226" font-size="9.8" fill="#ffffff" stroke="#ffffff" stroke-width="0.1" textLength="34" lengthAdjust="spacingAndGlyphs">115.355</text>
<text x="686" y="259" font-size="9.8" fill="#ffffff" stroke="#ffffff" stroke-width="0.1" textLength="34" lengthAdjust="spacingAndGlyphs">115.170</text>
<text x="686" y="292" font-size="9.8" fill="#ffffff" stroke="#ffffff" stroke-width="0.1" textLength="34" lengthAdjust="spacingAndGlyphs">114.985</text>
<text x="684" y="304" font-size="9.8" fill="#ffffff" stroke="#ffffff" stroke-width="0.1" textLength="14" lengthAdjust="spacingAndGlyphs">120</text>
<text x="684" y="310" font-size="9.8" fill="#ffffff" stroke="#ffffff" stroke-width="0.1" textLength="14" lengthAdjust="spacingAndGlyphs">100</text>
<text x="684" y="321" font-size="9.8" fill="#ffffff" stroke="#ffffff" stroke-width="0.1" textLength="9.5" lengthAdjust="spacingAndGlyphs">80</text>
<text x="684" y="339" font-size="9.8" fill="#ffffff" stroke="#ffffff" stroke-width="0.1" textLength="9.5" lengthAdjust="spacingAndGlyphs">50</text>
<text x="684" y="367" font-size="9.8" fill="#ffffff" stroke="#ffffff" stroke-width="0.1" textLength="19" lengthAdjust="spacingAndGlyphs">0.00</text>
<text x="684" y="396" font-size="9.8" fill="#ffffff" stroke="#ffffff" stroke-width="0.1" textLength="13" lengthAdjust="spacingAndGlyphs">-50</text>
<text x="684" y="413" font-size="9.8" fill="#ffffff" stroke="#ffffff" stroke-width="0.1" textLength="13" lengthAdjust="spacingAndGlyphs">-80</text>
<text x="684" y="418" font-size="9.8" fill="#ffffff" stroke="#ffffff" stroke-width="0.1" textLength="18" lengthAdjust="spacingAndGlyphs">-100</text>
<text x="684" y="434" font-size="9.8" fill="#ffffff" stroke="#ffffff" stroke-width="0.1" textLength="38" lengthAdjust="spacingAndGlyphs">100.7073</text>
<text x="684" y="483" font-size="9.8" fill="#ffffff" stroke="#ffffff" stroke-width="0.1" textLength="14" lengthAdjust="spacingAndGlyphs">100</text>
<text x="684" y="548" font-size="9.8" fill="#ffffff" stroke="#ffffff" stroke-width="0.1" textLength="33" lengthAdjust="spacingAndGlyphs">99.0599</text>
<text x="11" y="564" font-size="9.8" fill="#ffffff" stroke="#ffffff" stroke-width="0.1" textLength="48" lengthAdjust="spacingAndGlyphs">9 Feb 2022</text>
<text x="75" y="564" font-size="9.8" fill="#ffffff" stroke="#ffffff" stroke-width="0.1" textLength="55" lengthAdjust="spacingAndGlyphs">10 Feb 04:00</text>
<text x="139" y="564" font-size="9.8" fill="#ffffff" stroke="#ffffff" stroke-width="0.1" textLength="55" lengthAdjust="spacingAndGlyphs">10 Feb 12:00</text>
<text x="203" y="564" font-size="9.8" fill="#ffffff" stroke="#ffffff" stroke-width="0.1" textLength="55" lengthAdjust="spacingAndGlyphs">10 Feb 20:00</text>
<text x="267" y="564" font-size="9.8" fill="#ffffff" stroke="#ffffff" stroke-width="0.1" textLength="55" lengthAdjust="spacingAndGlyphs">11 Feb 04:00</text>
<text x="331" y="564" font-size="9.8" fill="#ffffff" stroke="#ffffff" stroke-width="0.1" textLength="55" lengthAdjust="spacingAndGlyphs">11 Feb 12:00</text>
<text x="395" y="564" font-size="9.8" fill="#ffffff" stroke="#ffffff" stroke-width="0.1" textLength="55" lengthAdjust="spacingAndGlyphs">11 Feb 20:00</text>
<text x="459" y="564" font-size="9.8" fill="#ffffff" stroke="#ffffff" stroke-width="0.1" textLength="55" lengthAdjust="spacingAndGlyphs">14 Feb 04:00</text>
<text x="523" y="564" font-size="9.8" fill="#ffffff" stroke="#ffffff" stroke-width="0.1" textLength="55" lengthAdjust="spacingAndGlyphs">14 Feb 12:00</text>
<text x="587" y="564" font-size="9.8" fill="#ffffff" stroke="#ffffff" stroke-width="0.1" textLength="55" lengthAdjust="spacingAndGlyphs">14 Feb 20:00</text>
<text x="651" y="564" font-size="9.8" fill="#ffffff" stroke="#ffffff" stroke-width="0.1" textLength="55" lengthAdjust="spacingAndGlyphs">15 Feb 04:00</text>
</svg></body></html>
